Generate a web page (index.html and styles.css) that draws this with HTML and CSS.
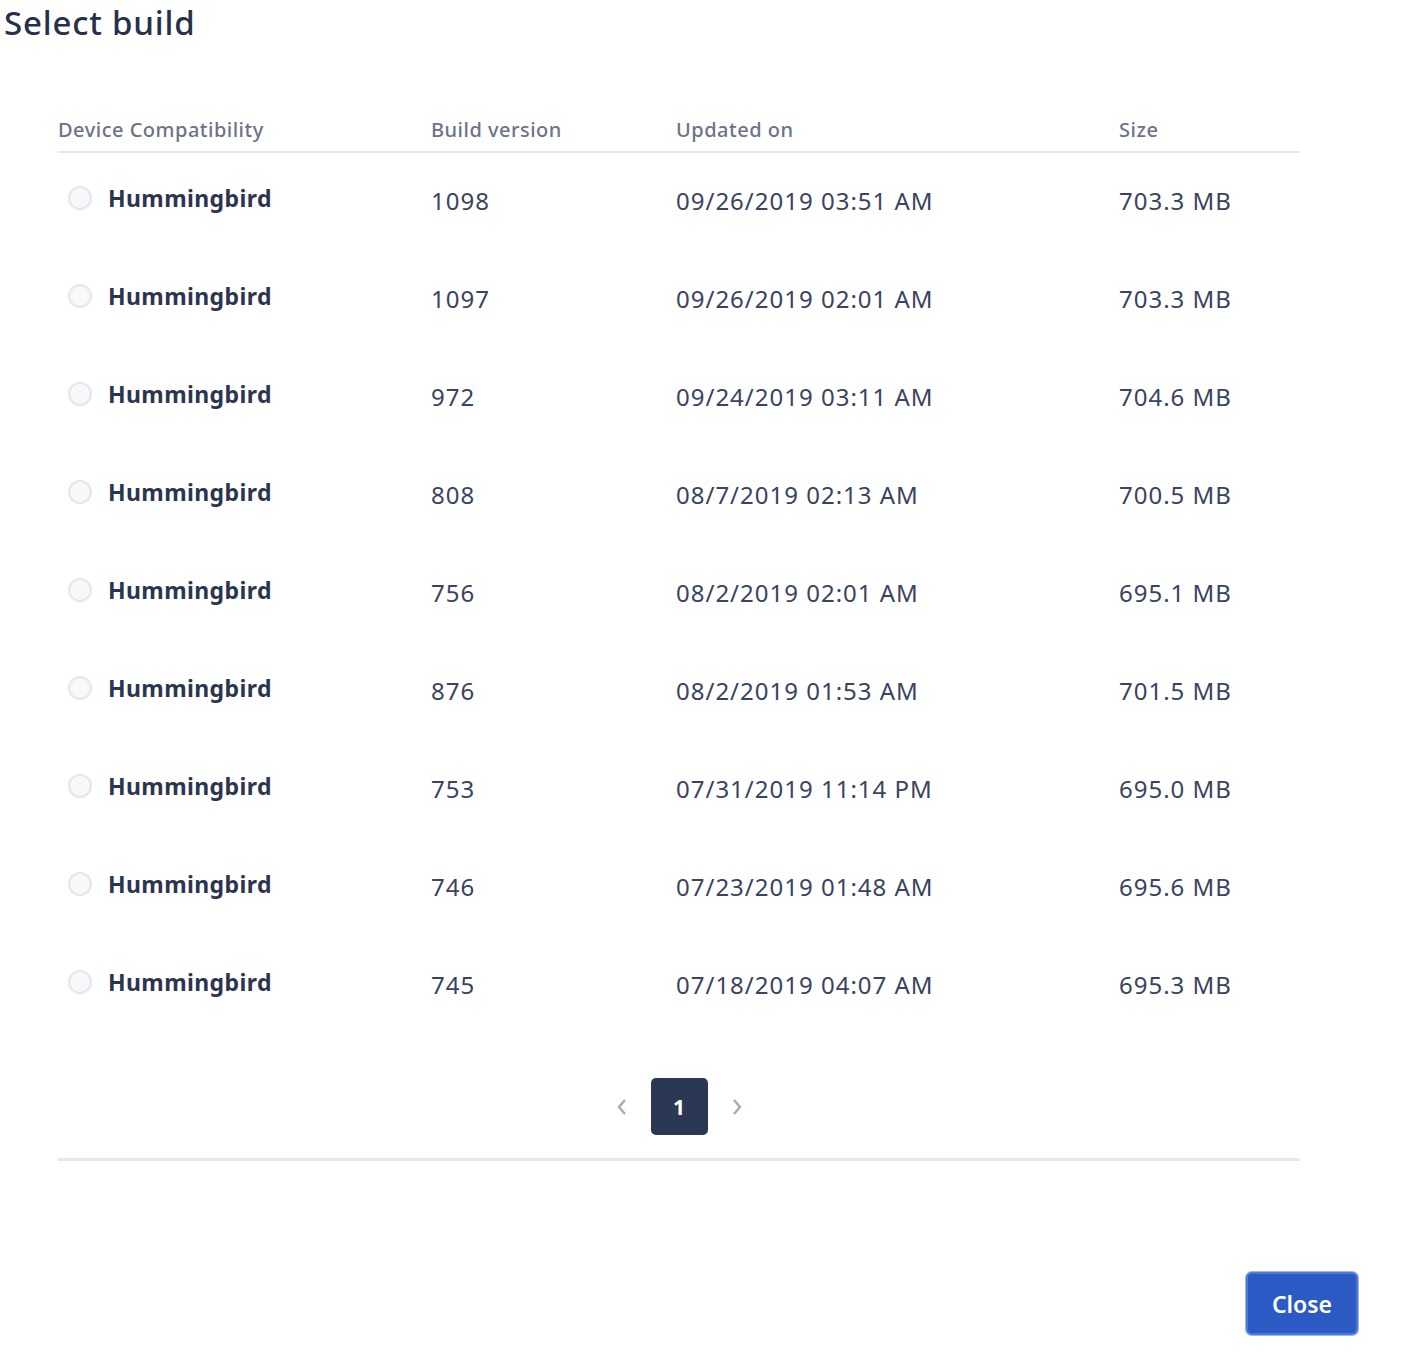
FILE: index.html
```html
<!DOCTYPE html>
<html>
<head>
<meta charset="utf-8">
<link rel="stylesheet" href="styles.css">
</head>
<body>
<div class="modal">
  <h1 class="title">Select build</h1>
  <div class="table">
    <div class="row head">
      <div class="c1">Device Compatibility</div>
      <div class="c2">Build version</div>
      <div class="c3">Updated on</div>
      <div class="c4">Size</div>
    </div>
    <div class="row"><div class="c1"><span class="radio"></span><span class="name">Hummingbird</span></div><div class="c2">1098</div><div class="c3">09/26/2019 03:51 AM</div><div class="c4">703.3 MB</div></div>
    <div class="row"><div class="c1"><span class="radio"></span><span class="name">Hummingbird</span></div><div class="c2">1097</div><div class="c3">09/26/2019 02:01 AM</div><div class="c4">703.3 MB</div></div>
    <div class="row"><div class="c1"><span class="radio"></span><span class="name">Hummingbird</span></div><div class="c2">972</div><div class="c3">09/24/2019 03:11 AM</div><div class="c4">704.6 MB</div></div>
    <div class="row"><div class="c1"><span class="radio"></span><span class="name">Hummingbird</span></div><div class="c2">808</div><div class="c3">08/7/2019 02:13 AM</div><div class="c4">700.5 MB</div></div>
    <div class="row"><div class="c1"><span class="radio"></span><span class="name">Hummingbird</span></div><div class="c2">756</div><div class="c3">08/2/2019 02:01 AM</div><div class="c4">695.1 MB</div></div>
    <div class="row"><div class="c1"><span class="radio"></span><span class="name">Hummingbird</span></div><div class="c2">876</div><div class="c3">08/2/2019 01:53 AM</div><div class="c4">701.5 MB</div></div>
    <div class="row"><div class="c1"><span class="radio"></span><span class="name">Hummingbird</span></div><div class="c2">753</div><div class="c3">07/31/2019 11:14 PM</div><div class="c4">695.0 MB</div></div>
    <div class="row"><div class="c1"><span class="radio"></span><span class="name">Hummingbird</span></div><div class="c2">746</div><div class="c3">07/23/2019 01:48 AM</div><div class="c4">695.6 MB</div></div>
    <div class="row"><div class="c1"><span class="radio"></span><span class="name">Hummingbird</span></div><div class="c2">745</div><div class="c3">07/18/2019 04:07 AM</div><div class="c4">695.3 MB</div></div>
    <div class="pager">
      <span class="chev"><svg width="14" height="22" viewBox="0 0 14 22"><path d="M10 4 L4 11 L10 18" fill="none" stroke="#a4aab6" stroke-width="2.4"/></svg></span>
      <span class="page">1</span>
      <span class="chev"><svg width="14" height="22" viewBox="0 0 14 22"><path d="M4 4 L10 11 L4 18" fill="none" stroke="#a4aab6" stroke-width="2.4"/></svg></span>
    </div>
  </div>
  <div class="footer">
    <button class="close">Close</button>
  </div>
</div>
</body>
</html>
```
FILE: styles.css
```css
html, body {
  margin: 0;
  padding: 0;
  background: #ffffff;
}
body {
  font-family: "Noto Sans", "Open Sans", sans-serif;
  color: #2c3550;
  width: 1422px;
  height: 1366px;
}
.modal {
  display: flex;
  flex-direction: column;
}
.title {
  margin: 0;
  padding: 0 0 0 4px;
  font-size: 33px;
  font-weight: 500;
  line-height: 46px;
  color: #26304b;
  letter-spacing: 0.8px;
}
.table {
  margin: 64px 0 0 58px;
  width: 1242px;
  border-bottom: 3px solid #e4e7ec;
}
.row {
  display: grid;
  grid-template-columns: 373px 245px 443px 181px;
  height: 98px;
  align-items: start;
  font-size: 24px;
  letter-spacing: 1px;
  color: #3a4360;
}
.row > div {
  padding-top: 32px;
  line-height: 32px;
}
.row.head {
  height: 41px;
  border-bottom: 2px solid #e6e8ee;
  font-size: 20px;
  letter-spacing: 0.5px;
  font-weight: 500;
  color: #6b7388;
}
.row.head > div {
  padding-top: 0;
  line-height: 40px;
}
.row > .c1 {
  display: flex;
  align-items: center;
  padding-top: 29px;
  letter-spacing: 0.4px;
}
.radio {
  width: 20px;
  height: 20px;
  border: 2px solid #e4e6ec;
  background: #f7f8fa;
  border-radius: 50%;
  margin-left: 10px;
  margin-right: 16px;
  flex: none;
}
.name {
  font-weight: 700;
  font-size: 23px;
  color: #2c3550;
}
.row.head > .c1 {
  padding-top: 0;
  letter-spacing: 0.5px;
}
.pager {
  display: flex;
  justify-content: center;
  align-items: center;
  gap: 22px;
  height: 57px;
  margin-top: 43px;
  margin-bottom: 23px;
}
.chev {
  display: flex;
  align-items: center;
}
.page {
  width: 57px;
  height: 57px;
  border-radius: 5px;
  background: #2b3854;
  color: #ffffff;
  display: flex;
  align-items: center;
  justify-content: center;
  font-weight: 700;
  font-size: 21px;
}
.footer {
  display: flex;
  justify-content: flex-end;
  padding-right: 64px;
  margin-top: 111px;
}
.close {
  width: 112px;
  height: 63px;
  border-radius: 6px;
  border: 2px solid #4a78dd;
  background: #2c5ac4;
  color: #ffffff;
  font-family: "Noto Sans", "Open Sans", sans-serif;
  font-size: 23px;
  font-weight: 600;
  box-shadow: 0 0 0 1px #9cb4ec;
}
```
